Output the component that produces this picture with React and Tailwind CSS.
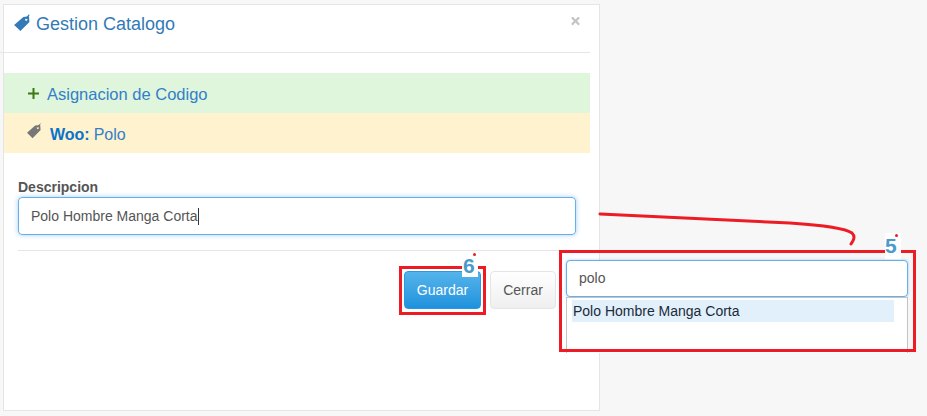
import { FaTimes } from 'react-icons/fa';

const TagIcon = ({ className }) => (
    <svg className={className} viewBox="0 0 16 16" fill="currentColor">
        <path fillRule="evenodd" d="M9.2 2.6 L14.2 2 L14.6 7 L6.6 15.2 L1 9.8 Z M11.8 4 a1 1 0 1 0 0.01 0 Z" />
        <path d="M11.6 4.4 L14.4 0.6" stroke="currentColor" strokeWidth="1" fill="none" />
    </svg>
);

const App = () => {
    return (
        <div className="relative w-[927px] h-[416px] overflow-hidden bg-[#f7f7f7] pt-1 pl-[3px] font-['Liberation_Sans',Arial,sans-serif] text-[#555]">
            {/* Modal */}
            <div className="w-[597px] h-[407px] bg-white border border-[#e5e5e5] pr-[9px]">
                <div className="relative h-[48px] flex items-start pt-[8px] border-b border-[#e5e5e5] -ml-[4px] pl-[13px]">
                    <TagIcon className="text-[#337ab7] w-[18px] h-[18px] mt-[1px]" />
                    <span className="ml-[5px] text-[18px] leading-[22px] text-[#337ab7]">Gestion Catalogo</span>
                    <FaTimes className="absolute right-[9px] top-[10px] w-[11px] h-[12px] text-[#c4c4c4]" />
                </div>

                <div className="mt-[20px] h-[40px] flex items-center bg-[#dff5dc] pl-[24px] text-[16.5px] text-[#337fc9]">
                    <svg className="w-[11px] h-[11px] text-[#3c7a10]" viewBox="0 0 11 11" fill="none" stroke="currentColor" strokeWidth="2">
                        <path d="M5.5 0 V11 M0 5.5 H11" />
                    </svg>
                    <span className="ml-[8px] mt-[2px]">Asignacion de Codigo</span>
                </div>
                <div className="h-[40px] flex items-center bg-[#fef2cf] pl-[22px] text-[16px] text-[#337fc9]">
                    <TagIcon className="w-[16px] h-[16px] text-[#777] -mt-[4px]" />
                    <span className="ml-[8px] mt-[3px] font-bold text-[#0b74c9]">Woo:</span>
                    <span className="ml-[4px] mt-[3px]">Polo</span>
                </div>

                <div className="pl-[14px] pt-[26px]">
                    <label className="block text-[14px] leading-[16px] font-bold text-[#555]">Descripcion</label>
                    <div className="mt-[2px] w-[558px] h-[38px] flex items-center rounded-[4px] border border-[#66afe9] shadow-[0_0_5px_rgba(102,175,233,0.6)] pl-[12px] text-[14px] text-[#555]">
                        Polo Hombre Manga Corta<span className="w-px h-[17px] bg-[#333]" />
                    </div>
                    <div className="mt-[15px] border-t border-[#e5e5e5]" />
                    <div className="mt-[20px] w-[538px] flex justify-end gap-[9px]">
                        <button className="w-[77px] h-[38px] rounded-[4px] bg-gradient-to-b from-[#54b4eb] to-[#1d92dd] border border-[#2a9ae0] text-[14px] text-white">Guardar</button>
                        <button className="w-[66px] h-[38px] rounded-[4px] bg-gradient-to-b from-white to-[#efefef] border border-[#e5e5e5] text-[14px] text-[#555]">Cerrar</button>
                    </div>
                </div>
            </div>

            {/* Annotation: callout 6 */}
            <div className="absolute left-[399px] top-[266px] w-[87px] h-[49px] border-[3px] border-[#ed1c24]" />
            <div className="absolute left-[462px] top-[254px] w-[16px] h-[23px] bg-white flex items-end justify-start pl-px text-[21px] font-bold leading-[23px] text-[#4a9bc9]">6</div>
            <div className="absolute left-[473px] top-[253px] w-[3px] h-[3px] rounded-full bg-[#ed1c24]" />

            {/* Annotation: zoomed combobox */}
            <div className="absolute left-[566px] top-[260px] w-[342px] h-[37px] bg-white rounded-[4px] border border-[#66afe9] shadow-[0_0_3px_rgba(102,175,233,0.6)] flex items-center pl-[12px] text-[14px] text-[#555]">polo</div>
            <div className="absolute left-[566px] top-[297px] w-[342px] h-[56px] bg-white border-x border-t border-[#c4c4c4] pl-[5px] pt-[2px]">
                <div className="w-[322px] h-[22px] bg-[#e1f0fb] flex items-center pl-px text-[14px] text-[#1b2a3a]">Polo Hombre Manga Corta</div>
            </div>
            <div className="absolute left-[559px] top-[250px] w-[357px] h-[102px] border-[3px] border-[#ed1c24]" />
            <div className="absolute left-[885px] top-[233px] w-[16px] h-[26px] bg-white flex items-end justify-start text-[21px] font-bold leading-[24px] text-[#4a9bc9] pb-[1px]">5</div>
            <div className="absolute left-[895px] top-[234px] w-[3px] h-[3px] rounded-full bg-[#ed1c24]" />

            {/* Hand drawn arrow */}
            <svg className="absolute left-[595px] top-[205px]" width="270" height="45" viewBox="0 0 270 45" fill="none">
                <path d="M5 9 C 50 11, 110 14, 195 18 C 225 20, 250 23, 257 28 C 261 32, 258 36, 256 39" stroke="#ed1c24" strokeWidth="3" strokeLinecap="round" />
            </svg>
        </div>
    );
};

export default App;
